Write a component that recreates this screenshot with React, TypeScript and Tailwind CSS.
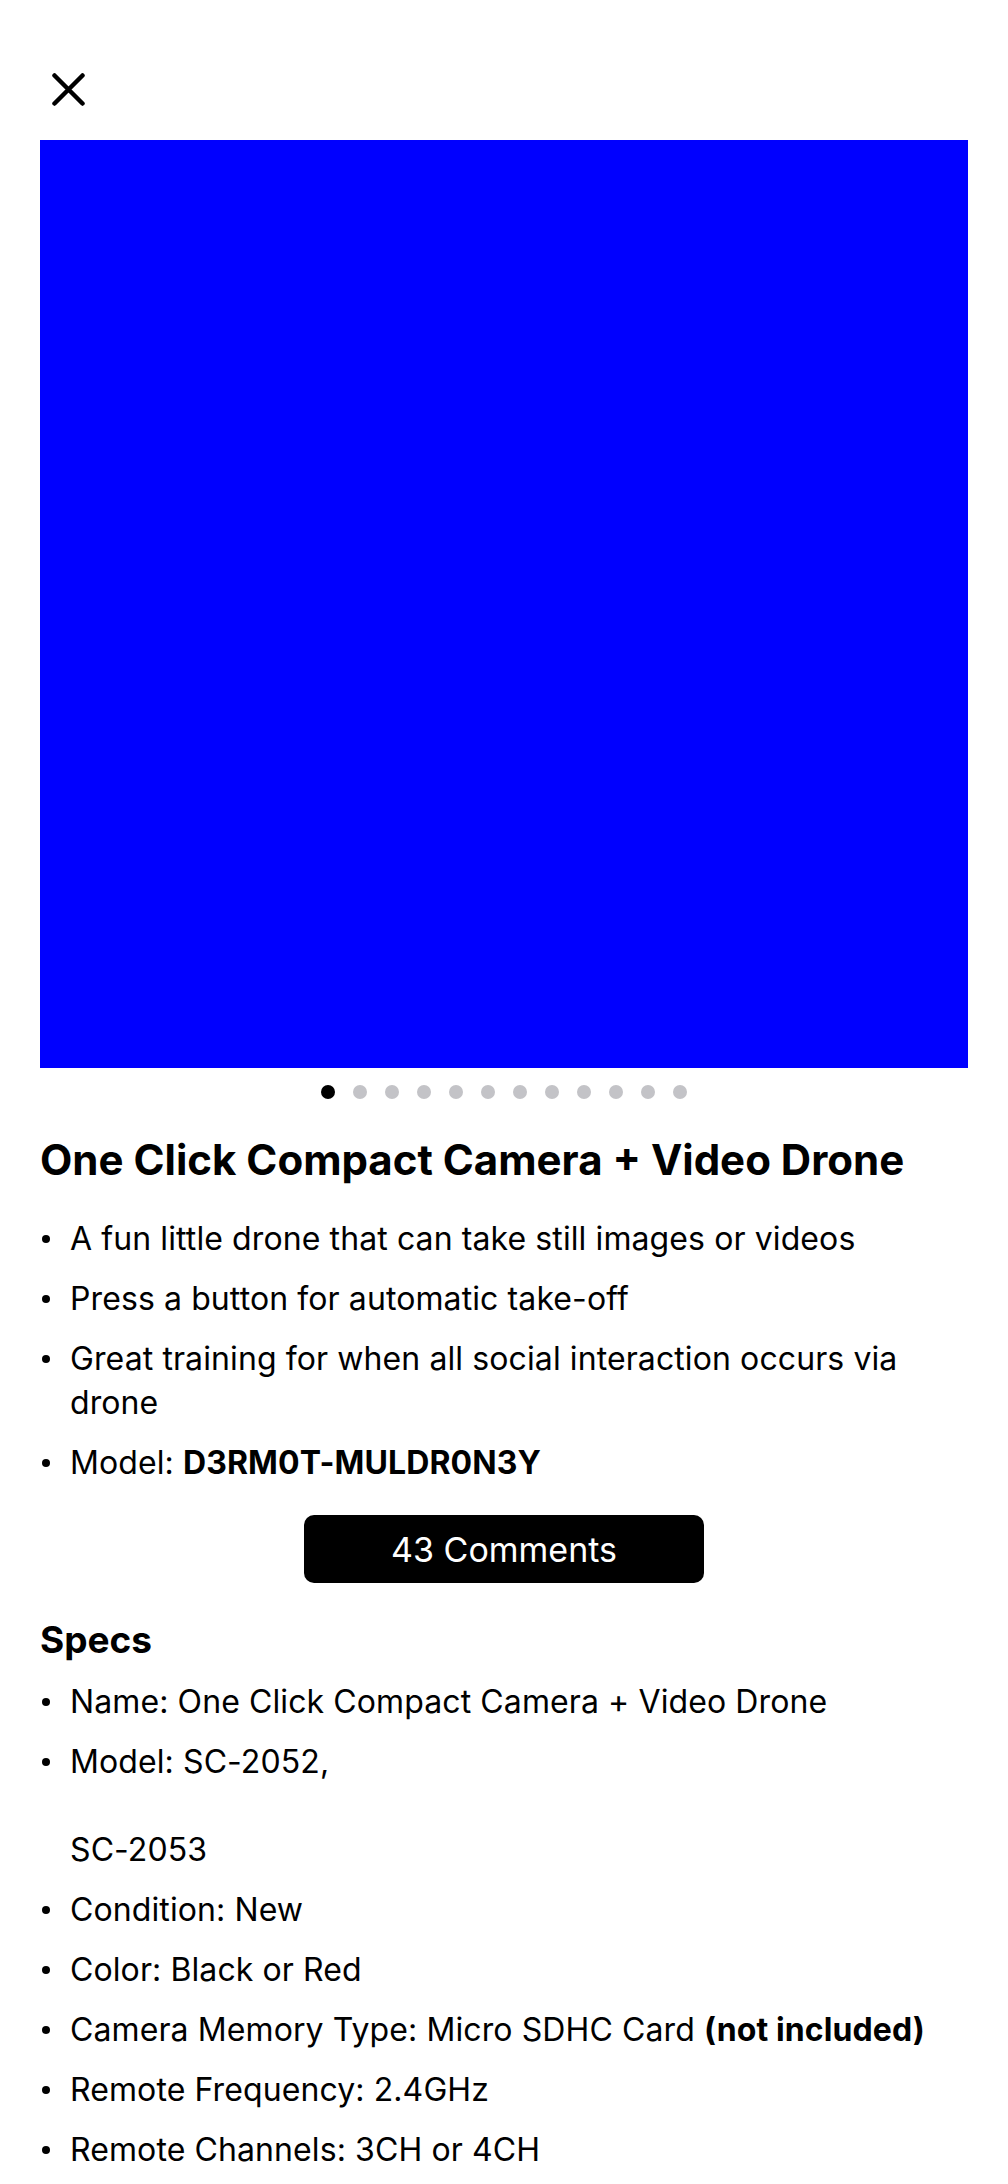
import React from 'react';

const dots = Array.from({ length: 12 }, (_, i) => i);

function Bullet({ children }: { children: React.ReactNode }) {
    return (
        <li className="flex">
            <span className="flex h-[44px] w-[30px] shrink-0 items-center">
                <span className="ml-[2px] h-[8px] w-[8px] rounded-full bg-black" />
            </span>
            <span className="min-w-0">{children}</span>
        </li>
    );
}

export default function App() {
    return (
        <div className="min-h-screen bg-white font-['Inter',sans-serif] text-black">
            <div className="h-[140px] pl-[52px] pt-[73px]">
                <button type="button" aria-label="Close" className="block">
                    <svg width="33" height="33" viewBox="0 0 33 33" fill="none">
                        <path
                            d="M2.5 2.5L30.5 30.5M30.5 2.5L2.5 30.5"
                            stroke="black"
                            strokeWidth="4.5"
                            strokeLinecap="round"
                        />
                    </svg>
                </button>
            </div>

            <div className="px-[40px]">
                <div className="aspect-square w-full bg-[#0000ff]" />

                <div className="mt-[17px] flex justify-center gap-[18px]">
                    {dots.map((i) => (
                        <span
                            key={i}
                            className={
                                i === 0
                                    ? 'h-[14px] w-[14px] rounded-full bg-black'
                                    : 'h-[14px] w-[14px] rounded-full bg-[#c3c3c7]'
                            }
                        />
                    ))}
                </div>

                <h1 className="mt-[38px] text-[42px] font-bold leading-[46px]">
                    One Click Compact Camera + Video Drone
                </h1>

                <ul className="mt-[34px] flex flex-col gap-[16px] text-[32px] leading-[44px] tracking-[0.1px]">
                    <Bullet>A fun little drone that can take still images or videos</Bullet>
                    <Bullet>Press a button for automatic take-off</Bullet>
                    <Bullet>Great training for when all social interaction occurs via drone</Bullet>
                    <Bullet>
                        Model: <span className="font-bold">D3RM0T-MULDR0N3Y</span>
                    </Bullet>
                </ul>

                <div className="mt-[30px] flex justify-center">
                    <button
                        type="button"
                        className="h-[68px] w-[400px] rounded-[10px] bg-black text-[34px] text-white"
                    >
                        43 Comments
                    </button>
                </div>

                <h2 className="mt-[37px] text-[37px] font-bold leading-[40px]">Specs</h2>

                <ul className="mt-[20px] flex flex-col gap-[16px] text-[32px] leading-[44px] tracking-[0.1px]">
                    <Bullet>Name: One Click Compact Camera + Video Drone</Bullet>
                    <Bullet>
                        Model: SC-2052,
                        <br />
                        <br />
                        SC-2053
                    </Bullet>
                    <Bullet>Condition: New</Bullet>
                    <Bullet>Color: Black or Red</Bullet>
                    <Bullet>
                        Camera Memory Type: Micro SDHC Card{' '}
                        <span className="font-bold">(not included)</span>
                    </Bullet>
                    <Bullet>Remote Frequency: 2.4GHz</Bullet>
                    <Bullet>Remote Channels: 3CH or 4CH</Bullet>
                </ul>
            </div>
        </div>
    );
}
